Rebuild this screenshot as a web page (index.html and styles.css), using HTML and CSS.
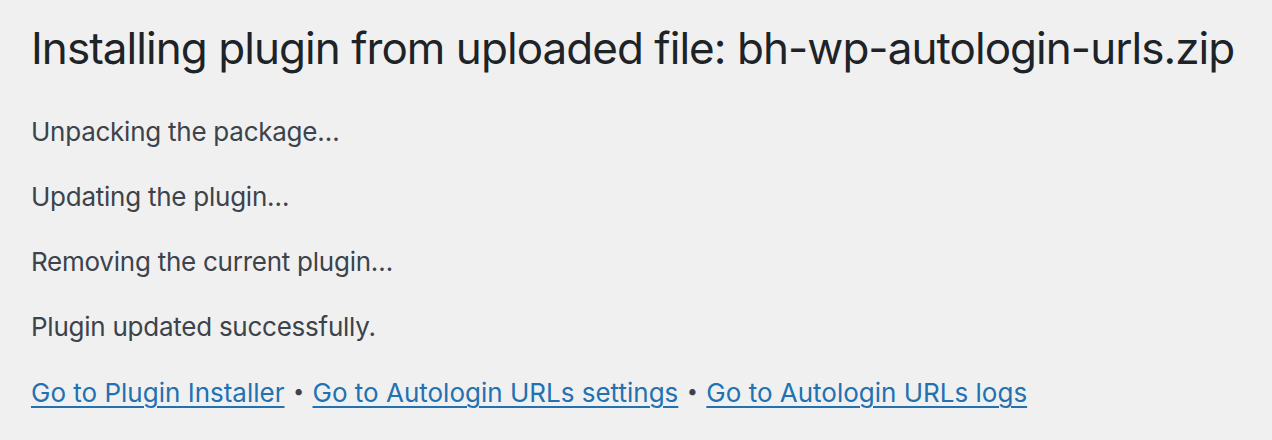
FILE: index.html
```html
<!DOCTYPE html>
<html>
<head>
<meta charset="utf-8">
<link rel="stylesheet" href="styles.css">
</head>
<body>
<div class="wrap">
  <h1 class="title">Installing plugin from uploaded file: bh-wp-autologin-urls.zip</h1>
  <p class="msg">Unpacking the package…</p>
  <p class="msg">Updating the plugin…</p>
  <p class="msg">Removing the current plugin…</p>
  <p class="msg">Plugin updated successfully.</p>
  <p class="msg links"><a href="#">Go to Plugin Installer</a><span class="sep">•</span><a href="#">Go to Autologin URLs settings</a><span class="sep">•</span><a href="#">Go to Autologin URLs logs</a></p>
</div>
</body>
</html>
```

FILE: styles.css
```css
html, body {
  margin: 0;
  padding: 0;
  background: #f0f0f1;
}
body {
  font-family: Inter, "Noto Sans", sans-serif;
  color: #3c434a;
  font-size: 26px;
  line-height: 39px;
  letter-spacing: -0.25px;
}
.wrap {
  padding: 0 31px;
}
.title {
  margin: 0;
  padding: 18px 0 8px;
  font-size: 44px;
  font-weight: 400;
  line-height: 60px;
  letter-spacing: -0.95px;
  white-space: nowrap;
  color: #1d2327;
}
.msg {
  margin: 26px 0;
}
.links {
  letter-spacing: 0;
  white-space: nowrap;
}
.links a {
  color: #2271b1;
  text-decoration: underline;
  text-decoration-thickness: 2px;
  text-underline-offset: 4px;
}
.sep {
  display: inline-block;
  width: 28px;
  text-align: center;
  font-size: 20px;
  vertical-align: 4px;
  color: #3c434a;
}
```
